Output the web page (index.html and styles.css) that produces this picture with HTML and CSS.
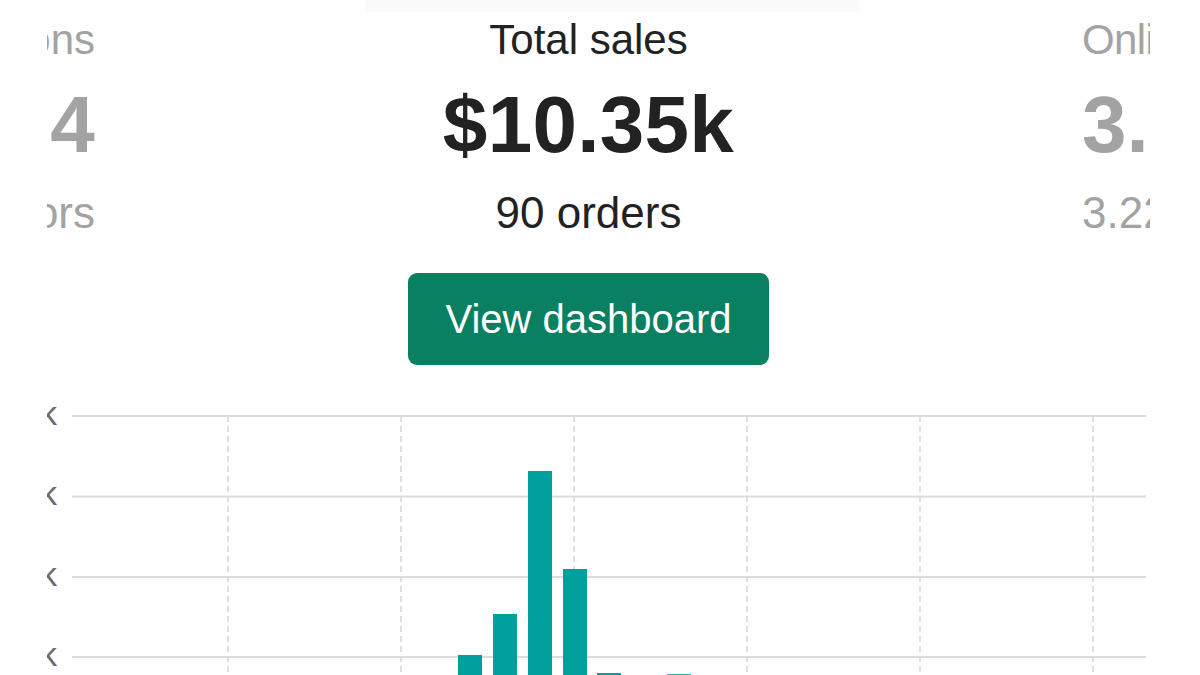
FILE: index.html
```html
<!DOCTYPE html>
<html lang="en">
<head>
<meta charset="utf-8">
<title>Total sales</title>
<link rel="stylesheet" href="styles.css">
</head>
<body>
<div class="topband"></div>
<div class="viewport">
  <div class="track">
    <div class="metric metric-left">
      <div class="m-title">Sessions</div>
      <div class="m-value">4</div>
      <div class="m-sub">4 visitors</div>
    </div>
    <div class="metric metric-center">
      <div class="m-title">Total sales</div>
      <div class="m-value">$10.35k</div>
      <div class="m-sub">90 orders</div>
      <button class="btn">View dashboard</button>
    </div>
    <div class="metric metric-right">
      <div class="m-title">Online store conversion rate</div>
      <div class="m-value">3.33%</div>
      <div class="m-sub">3.22% of sessions</div>
    </div>
  </div>
  <svg class="chart" width="1103" height="340" viewBox="0 0 1103 340">
    <g class="ylabels">
      <text x="10" y="24.5">$3k</text>
      <text x="10" y="105">$2k</text>
      <text x="10" y="185.5">$1k</text>
      <text x="10" y="265.5">$0k</text>
    </g>
    <g class="vgrid">
      <line x1="181" y1="16" x2="181" y2="340"/>
      <line x1="354" y1="16" x2="354" y2="340"/>
      <line x1="527" y1="16" x2="527" y2="340"/>
      <line x1="700" y1="16" x2="700" y2="340"/>
      <line x1="873" y1="16" x2="873" y2="340"/>
      <line x1="1046" y1="16" x2="1046" y2="340"/>
    </g>
    <g class="hgrid">
      <line x1="25" y1="16" x2="1099" y2="16"/>
      <line x1="25" y1="96.5" x2="1099" y2="96.5"/>
      <line x1="25" y1="177" x2="1099" y2="177"/>
      <line x1="25" y1="257" x2="1099" y2="257"/>
      <line x1="25" y1="337.5" x2="1099" y2="337.5"/>
    </g>
    <g class="bars">
      <rect x="411" y="255" width="24" height="85"/>
      <rect x="446" y="214" width="24" height="126"/>
      <rect x="481" y="71" width="24" height="269"/>
      <rect x="516" y="169" width="24" height="171"/>
      <rect x="550" y="273" width="24" height="67"/>
      <rect class="bar-light" x="620" y="274" width="24" height="66"/>
    </g>
  </svg>
</div>
</body>
</html>
```

FILE: styles.css
```css
html, body {
  margin: 0;
  padding: 0;
  background: #ffffff;
}

body {
  width: 1200px;
  height: 675px;
  overflow: hidden;
  font-family: "Liberation Sans", Arial, sans-serif;
  color: #222222;
}

.topband {
  height: 12px;
  width: 495px;
  margin-left: 365px;
  background: #fafafa;
}

.viewport {
  margin-left: 47px;
  width: 1103px;
  overflow: hidden;
}

.track {
  margin-top: 3px;
  margin-left: -200px;
  display: grid;
  grid-template-columns: 248px 987px 300px;
  align-items: start;
}

.metric {
  display: flex;
  flex-direction: column;
  white-space: nowrap;
}

.metric-left {
  align-items: flex-end;
  text-align: right;
  color: #a3a3a3;
}

.metric-center {
  align-items: center;
  text-align: center;
  color: #222222;
}

.metric-right {
  align-items: flex-start;
  text-align: left;
  color: #a3a3a3;
}

.m-title {
  font-size: 42px;
  line-height: 50px;
}

.metric-right .m-title {
  letter-spacing: -0.6px;
}

.m-value {
  margin-top: 15px;
  font-size: 80px;
  line-height: 90px;
  font-weight: 700;
  letter-spacing: 0.3px;
}

.metric-right .m-value {
  letter-spacing: 0;
}

.m-sub {
  margin-top: 18px;
  font-size: 44px;
  line-height: 50px;
}

.btn {
  margin-top: 35px;
  width: 361px;
  height: 92px;
  border: none;
  border-radius: 9px;
  background: #0a8062;
  color: #ffffff;
  font-family: "Liberation Sans", Arial, sans-serif;
  font-size: 40px;
  display: flex;
  align-items: center;
  justify-content: center;
  padding: 0;
}

.chart {
  display: block;
  margin-top: 35px;
}

.ylabels text {
  font-family: "Liberation Sans", Arial, sans-serif;
  font-size: 34px;
  fill: #6b6b6b;
  text-anchor: end;
}

.hgrid line {
  stroke: #dcdcdc;
  stroke-width: 2;
}

.vgrid line {
  stroke: #d6d6d6;
  stroke-width: 1.5;
  stroke-dasharray: 6 4;
}

.bars rect {
  fill: #00a19d;
}

.bars .bar-light {
  fill: #33b3af;
}
```
